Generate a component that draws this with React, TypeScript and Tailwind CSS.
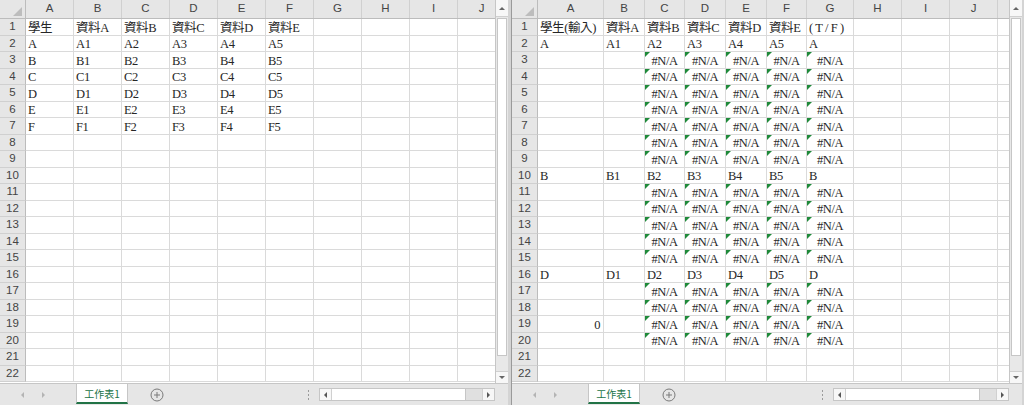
import React from "react";

type Cell = string | { v: string; err?: boolean; num?: boolean } | null;

const LETTERS = ["A", "B", "C", "D", "E", "F", "G", "H", "I", "J", ""];

const leftWidths = [
  "w-[48px]", "w-[48px]", "w-[48px]", "w-[48px]", "w-[48px]",
  "w-[48px]", "w-[48px]", "w-[48px]", "w-[48px]", "w-[48px]", "w-[48px]",
];

const rightWidths = [
  "w-[66px]", "w-[41px]", "w-[40px]", "w-[41px]", "w-[41px]",
  "w-[40px]", "w-[47px]", "w-[48px]", "w-[48px]", "w-[48px]", "w-[48px]",
];

const leftRows: Cell[][] = [
  ["學生", "資料A", "資料B", "資料C", "資料D", "資料E"],
  ["A", "A1", "A2", "A3", "A4", "A5"],
  ["B", "B1", "B2", "B3", "B4", "B5"],
  ["C", "C1", "C2", "C3", "C4", "C5"],
  ["D", "D1", "D2", "D3", "D4", "D5"],
  ["E", "E1", "E2", "E3", "E4", "E5"],
  ["F", "F1", "F2", "F3", "F4", "F5"],
];

const NA = { v: "#N/A", err: true };
const naRow: Cell[] = [null, null, NA, NA, NA, NA, NA];

const rightRows: Cell[][] = [
  ["學生(輸入)", "資料A", "資料B", "資料C", "資料D", "資料E", "( T / F )"],
  ["A", "A1", "A2", "A3", "A4", "A5", "A"],
  naRow, naRow, naRow, naRow, naRow, naRow, naRow,
  ["B", "B1", "B2", "B3", "B4", "B5", "B"],
  naRow, naRow, naRow, naRow, naRow,
  ["D", "D1", "D2", "D3", "D4", "D5", "D"],
  naRow, naRow,
  [{ v: "0", num: true }, null, NA, NA, NA, NA, NA],
  naRow,
];

function GridCell({ w, cell }: { w: string; cell: Cell }) {
  const base = `${w} shrink-0 relative border-r border-b border-[#dadada] flex items-end leading-[14px] whitespace-nowrap overflow-visible`;
  if (cell && typeof cell === "object") {
    if (cell.err) {
      return (
        <div className={`${base} justify-center`}>
          <span className="absolute top-0 left-0 w-0 h-0 border-t-[5px] border-t-[#1f8a3a] border-r-[5px] border-r-transparent" />
          <span>{cell.v}</span>
        </div>
      );
    }
    return <div className={`${base} justify-end pr-[3px]`}>{cell.v}</div>;
  }
  return <div className={`${base} pl-[2px]`}>{cell ?? ""}</div>;
}

function Sheet({ widths, rows }: { widths: string[]; rows: Cell[][] }) {
  return (
    <div className="flex-1 overflow-hidden bg-white">
      <div className="flex h-[19px] bg-[#e6e6e6] border-b border-[#bcbcbc]">
        <div className="w-[26px] shrink-0 relative border-r border-[#bcbcbc]">
          <span className="absolute right-[3px] bottom-[2px] w-0 h-0 border-l-[9px] border-l-transparent border-b-[9px] border-b-[#bdbdbd]" />
        </div>
        {widths.map((w, i) => (
          <div
            key={i}
            className={`${w} shrink-0 border-r border-[#d0d0d0] flex items-center justify-center text-[11.5px] text-[#444] font-['Liberation_Sans',sans-serif]`}
          >
            {LETTERS[i]}
          </div>
        ))}
      </div>
      {Array.from({ length: 22 }).map((_, r) => (
        <div key={r} className="flex h-[16.5px] font-['Liberation_Serif','Noto_Sans_CJK_TC',serif] text-[12.5px] tracking-[-0.4px] text-[#262626]">
          <div className="w-[26px] shrink-0 bg-[#e6e6e6] border-r border-b border-r-[#bcbcbc] border-b-[#d0d0d0] flex items-center justify-center text-[11.5px] tracking-normal text-[#444] font-['Liberation_Sans',sans-serif]">
            {r + 1}
          </div>
          {widths.map((w, c) => (
            <GridCell key={c} w={w} cell={rows[r]?.[c] ?? null} />
          ))}
        </div>
      ))}
    </div>
  );
}

function VScroll() {
  return (
    <div className="w-[13px] shrink-0 flex flex-col bg-[#e8e8e8] border-l border-[#c6c6c6]">
      <div className="h-[17px] bg-[#f7f7f7] border-b border-[#d0d0d0] flex items-center justify-center">
        <span className="w-0 h-0 border-l-[3px] border-r-[3px] border-b-[3px] border-l-transparent border-r-transparent border-b-[#666]" />
      </div>
      <div className="h-[338px] bg-white border border-[#c6c6c6] mt-[1px] mx-[1px]" />
      <div className="flex-1" />
      <div className="h-[12px] bg-[#f7f7f7] border-t border-[#d0d0d0] flex items-center justify-center">
        <span className="w-0 h-0 border-l-[3px] border-r-[3px] border-t-[3px] border-l-transparent border-r-transparent border-t-[#666]" />
      </div>
    </div>
  );
}

function TabBar() {
  return (
    <div className="h-[22px] flex bg-[#e6e6e6] border-t border-[#c6c6c6]">
      <div className="w-[76px] shrink-0 flex items-center gap-[18px] pl-[21px]">
        <span className="w-0 h-0 border-t-[3px] border-b-[3px] border-r-[3px] border-t-transparent border-b-transparent border-r-[#b4b4b4]" />
        <span className="w-0 h-0 border-t-[3px] border-b-[3px] border-l-[3px] border-t-transparent border-b-transparent border-l-[#b4b4b4]" />
      </div>
      <div className="w-[52px] shrink-0 bg-white border-x border-[#c6c6c6] border-b-2 border-b-[#217346] mb-[1px] flex items-center justify-center text-[10px] text-[#217346] font-['Noto_Sans_CJK_TC',sans-serif]">
        工作表1
      </div>
      <div className="w-[58px] shrink-0 flex items-center justify-center">
        <svg width="14" height="14" viewBox="0 0 14 14">
          <circle cx="7" cy="7" r="6" fill="none" stroke="#7a7a7a" strokeWidth="1" />
          <path d="M7 4v6M4 7h6" stroke="#7a7a7a" strokeWidth="1" />
        </svg>
      </div>
      <div className="flex-1" />
      <div className="w-[3px] flex flex-col justify-center gap-[2px] items-center mr-[9px]">
        <span className="w-[1px] h-[2px] bg-[#9a9a9a]" />
        <span className="w-[1px] h-[2px] bg-[#9a9a9a]" />
        <span className="w-[1px] h-[2px] bg-[#9a9a9a]" />
      </div>
      <div className="w-[176px] shrink-0 flex items-center mr-[13px]">
        <div className="h-[13px] w-full flex border border-[#c6c6c6] bg-[#e0e0e0]">
          <div className="w-[12px] bg-[#f7f7f7] border-r border-[#d0d0d0] flex items-center justify-center">
            <span className="w-0 h-0 border-t-[3px] border-b-[3px] border-r-[3px] border-t-transparent border-b-transparent border-r-[#555]" />
          </div>
          <div className="w-[134px] bg-white border-r border-[#c6c6c6]" />
          <div className="flex-1" />
          <div className="w-[12px] bg-[#f7f7f7] border-l border-[#d0d0d0] flex items-center justify-center">
            <span className="w-0 h-0 border-t-[3px] border-b-[3px] border-l-[3px] border-t-transparent border-b-transparent border-l-[#555]" />
          </div>
        </div>
      </div>
    </div>
  );
}

function ExcelWindow({ widths, rows, className }: { widths: string[]; rows: Cell[][]; className: string }) {
  return (
    <div className={`${className} shrink-0 flex flex-col h-[405px]`}>
      <div className="flex h-[383px]">
        <Sheet widths={widths} rows={rows} />
        <VScroll />
      </div>
      <TabBar />
    </div>
  );
}

export default function App() {
  return (
    <div className="flex w-[1024px] h-[405px] bg-[#e6e6e6] overflow-hidden">
      <ExcelWindow widths={leftWidths} rows={leftRows} className="w-[508px]" />
      <div className="w-[4px] shrink-0 bg-[#d4d4d4] border-r border-[#9a9a9a]" />
      <ExcelWindow widths={rightWidths} rows={rightRows} className="w-[510px]" />
      <div className="w-[2px] shrink-0 bg-[#d4d4d4]" />
    </div>
  );
}
